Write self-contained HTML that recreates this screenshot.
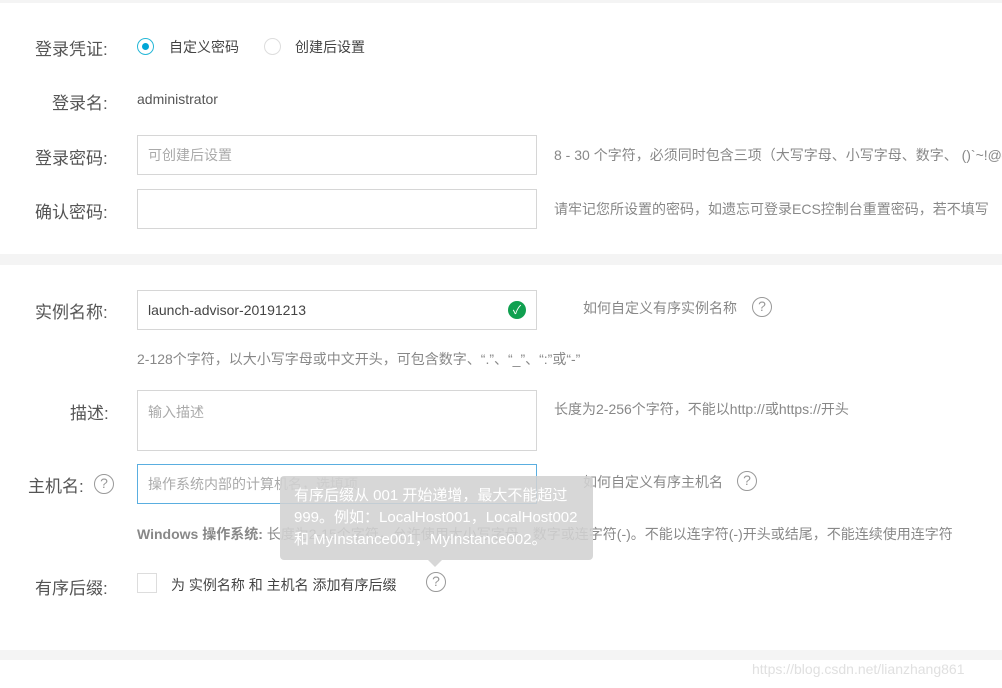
<!DOCTYPE html>
<html><head><meta charset="utf-8"><style>
*{margin:0;padding:0;box-sizing:border-box}
body{width:1002px;height:688px;overflow:hidden;background:#fff;font-family:"Liberation Sans","Noto Sans CJK SC",sans-serif;position:relative;color:#333}
.a{position:absolute;white-space:nowrap}
.band{position:absolute;left:0;width:1002px;background:#f4f4f4}
.lbl{font-size:17px;color:#555}
.inp{position:absolute;border:1px solid #d6d6d6;background:#fff;font-size:14px;color:#aaa;padding-left:10px;display:flex;align-items:center}
.hint{font-size:14px;color:#888}
.q{position:absolute;width:20px;height:20px;border:1.5px solid #999;border-radius:50%;color:#999;font-size:14px;text-align:center;line-height:17px}
</style></head><body>
<div class="band" style="top:0;height:3px"></div>
<div class="band" style="top:254px;height:11px"></div>
<div class="band" style="top:650px;height:10px"></div>

<div class="a lbl" style="left:35px;top:35px">登录凭证:</div>
<div class="a" style="left:137px;top:38px;width:17px;height:17px;border:1px solid #26b7d7;border-radius:50%"><div style="position:absolute;left:4px;top:4px;width:7px;height:7px;border-radius:50%;background:#00a6d6"></div></div>
<div class="a" style="left:169px;top:37px;font-size:14px;color:#444">自定义密码</div>
<div class="a" style="left:264px;top:38px;width:17px;height:17px;border:1px solid #ddd;border-radius:50%"></div>
<div class="a" style="left:295px;top:37px;font-size:14px;color:#444">创建后设置</div>

<div class="a lbl" style="left:52px;top:89px">登录名:</div>
<div class="a" style="left:137px;top:91px;font-size:14px;color:#555">administrator</div>

<div class="a lbl" style="left:35px;top:144px">登录密码:</div>
<div class="inp" style="left:137px;top:135px;width:400px;height:40px">可创建后设置</div>
<div class="a hint" style="left:554px;top:145px">8 - 30 个字符，必须同时包含三项（大写字母、小写字母、数字、 ()`~!@#$</div>

<div class="a lbl" style="left:35px;top:198px">确认密码:</div>
<div class="inp" style="left:137px;top:189px;width:400px;height:40px"></div>
<div class="a hint" style="left:554px;top:199px">请牢记您所设置的密码，如遗忘可登录ECS控制台重置密码，若不填写</div>

<div class="a lbl" style="left:35px;top:298px">实例名称:</div>
<div class="inp" style="left:137px;top:290px;width:400px;height:40px;color:#444">launch-advisor-20191213</div>
<div class="a" style="left:508px;top:301px;width:18px;height:18px;border-radius:50%;background:#10a050;color:#fff;font-size:12px;text-align:center;line-height:18px">✓</div>
<div class="a" style="left:583px;top:298px;font-size:14px;color:#888">如何自定义有序实例名称</div>
<div class="q" style="left:752px;top:297px">?</div>
<div class="a hint" style="left:137px;top:349px">2-128个字符，以大小写字母或中文开头，可包含数字、“.”、“_”、“:”或“-”</div>

<div class="a lbl" style="left:70px;top:399px">描述:</div>
<div class="inp" style="left:137px;top:390px;width:400px;height:61px;align-items:flex-start;padding-top:11px">输入描述</div>
<div class="a hint" style="left:554px;top:399px">长度为2-256个字符，不能以http://或https://开头</div>

<div class="a lbl" style="left:28px;top:472px">主机名:</div>
<div class="q" style="left:94px;top:474px">?</div>
<div class="inp" style="left:137px;top:464px;width:400px;height:40px;border-color:#5aaee0">操作系统内部的计算机名，选填项</div>
<div class="a" style="left:583px;top:472px;font-size:14px;color:#888">如何自定义有序主机名</div>
<div class="q" style="left:737px;top:471px">?</div>
<div class="a hint" style="left:137px;top:524px"><b>Windows 操作系统:</b> 长度为2-15个字符，允许使用大小写字母、数字或连字符(-)。不能以连字符(-)开头或结尾，不能连续使用连字符</div>

<div class="a" style="left:280px;top:476px;width:313px;height:84px;background:rgba(210,210,210,0.88);border-radius:4px"></div>
<div class="a" style="left:428px;top:560px;width:0;height:0;border-left:7px solid transparent;border-right:7px solid transparent;border-top:7px solid rgba(210,210,210,0.88)"></div>
<div class="a" style="left:294px;top:485px;font-size:15px;color:#fff;line-height:22px">有序后缀从 001 开始递增，最大不能超过<br>999。例如：LocalHost001，LocalHost002<br>和 MyInstance001，MyInstance002。</div>

<div class="a lbl" style="left:35px;top:574px">有序后缀:</div>
<div class="a" style="left:137px;top:573px;width:20px;height:20px;border:1px solid #ddd"></div>
<div class="a" style="left:171px;top:575px;font-size:14px;color:#444">为 实例名称 和 主机名 添加有序后缀</div>
<div class="q" style="left:426px;top:572px">?</div>

<div class="a" style="left:752px;top:661px;font-size:14px;color:#e0e0e0">https://blog.csdn.net/lianzhang861</div>
</body></html>
